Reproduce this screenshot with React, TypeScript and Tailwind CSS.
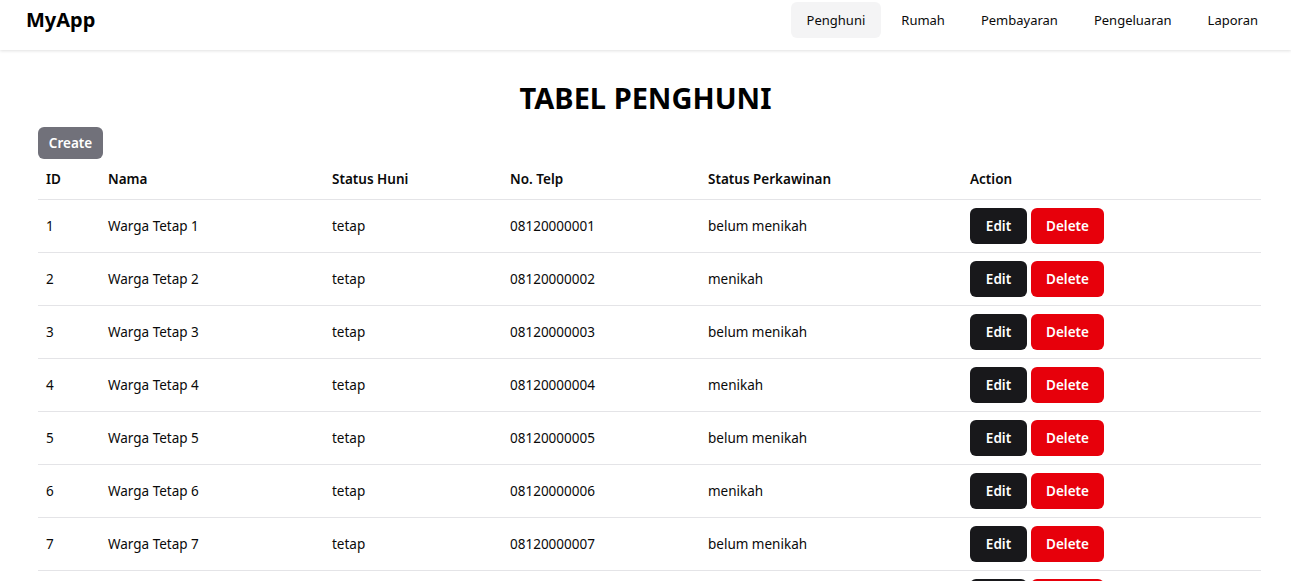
import React from "react";

type Penghuni = {
  id: number;
  nama: string;
  statusHuni: string;
  telp: string;
  perkawinan: string;
};

const NAV = ["Penghuni", "Rumah", "Pembayaran", "Pengeluaran", "Laporan"];

const rows: Penghuni[] = [1, 2, 3, 4, 5, 6, 7, 8].map((n) => ({
  id: n,
  nama: `Warga Tetap ${n}`,
  statusHuni: "tetap",
  telp: `0812000000${n}`,
  perkawinan: n % 2 === 1 ? "belum menikah" : "menikah",
}));

const Navbar = () => (
  <header className="flex h-[50px] items-start justify-between bg-white pl-[26px] pr-[17px] pt-[2px] shadow-[0_1px_3px_rgba(0,0,0,0.12)]">
    <div className="flex h-9 items-center text-xl font-bold text-black">MyApp</div>
    <nav className="flex gap-1">
      {NAV.map((item, i) => (
        <a
          key={item}
          className={`flex h-9 items-center rounded-md px-4 pt-px text-[13px] text-[#0a0a0a] ${i === 0 ? "bg-[#f4f4f5]" : ""}`}
        >
          {item}
        </a>
      ))}
    </nav>
  </header>
);

export default function App() {
  return (
    <div className="min-h-screen bg-white font-['Noto_Sans',sans-serif] text-[#0a0a0a]">
      <Navbar />
      <main className="px-[38px] pt-[30px]">
        <h1 className="text-center text-[29px] leading-9 font-bold text-black">TABEL PENGHUNI</h1>
        <button className="mt-[11px] h-8 w-[65px] rounded-md bg-[#71717a] text-[13.5px] font-semibold text-white">
          Create
        </button>
        <table className="w-[1223px] table-fixed text-left text-[13.5px]">
          <colgroup>
            <col className="w-[62px]" />
            <col className="w-[224px]" />
            <col className="w-[178px]" />
            <col className="w-[198px]" />
            <col className="w-[262px]" />
            <col />
          </colgroup>
          <thead>
            <tr className="h-10 border-b border-[#e4e4e7]">
              <th className="px-2 font-semibold">ID</th>
              <th className="px-2 font-semibold">Nama</th>
              <th className="px-2 font-semibold">Status Huni</th>
              <th className="px-2 font-semibold">No. Telp</th>
              <th className="px-2 font-semibold">Status Perkawinan</th>
              <th className="px-2 font-semibold">Action</th>
            </tr>
          </thead>
          <tbody>
            {rows.map((r) => (
              <tr key={r.id} className="h-[53px] border-b border-[#e4e4e7]">
                <td className="px-2 pt-[10px] pb-2">{r.id}</td>
                <td className="px-2 pt-[10px] pb-2">{r.nama}</td>
                <td className="px-2 pt-[10px] pb-2">{r.statusHuni}</td>
                <td className="px-2 pt-[10px] pb-2">{r.telp}</td>
                <td className="px-2 pt-[10px] pb-2">{r.perkawinan}</td>
                <td className="p-2">
                  <div className="flex gap-1">
                    <button className="h-9 w-[57px] rounded-md bg-[#18181b] pt-[2px] text-[13.5px] font-semibold text-white">
                      Edit
                    </button>
                    <button className="h-9 w-[73px] rounded-md bg-[#e7000b] pt-[2px] text-[13.5px] font-semibold text-white">
                      Delete
                    </button>
                  </div>
                </td>
              </tr>
            ))}
          </tbody>
        </table>
      </main>
    </div>
  );
}
